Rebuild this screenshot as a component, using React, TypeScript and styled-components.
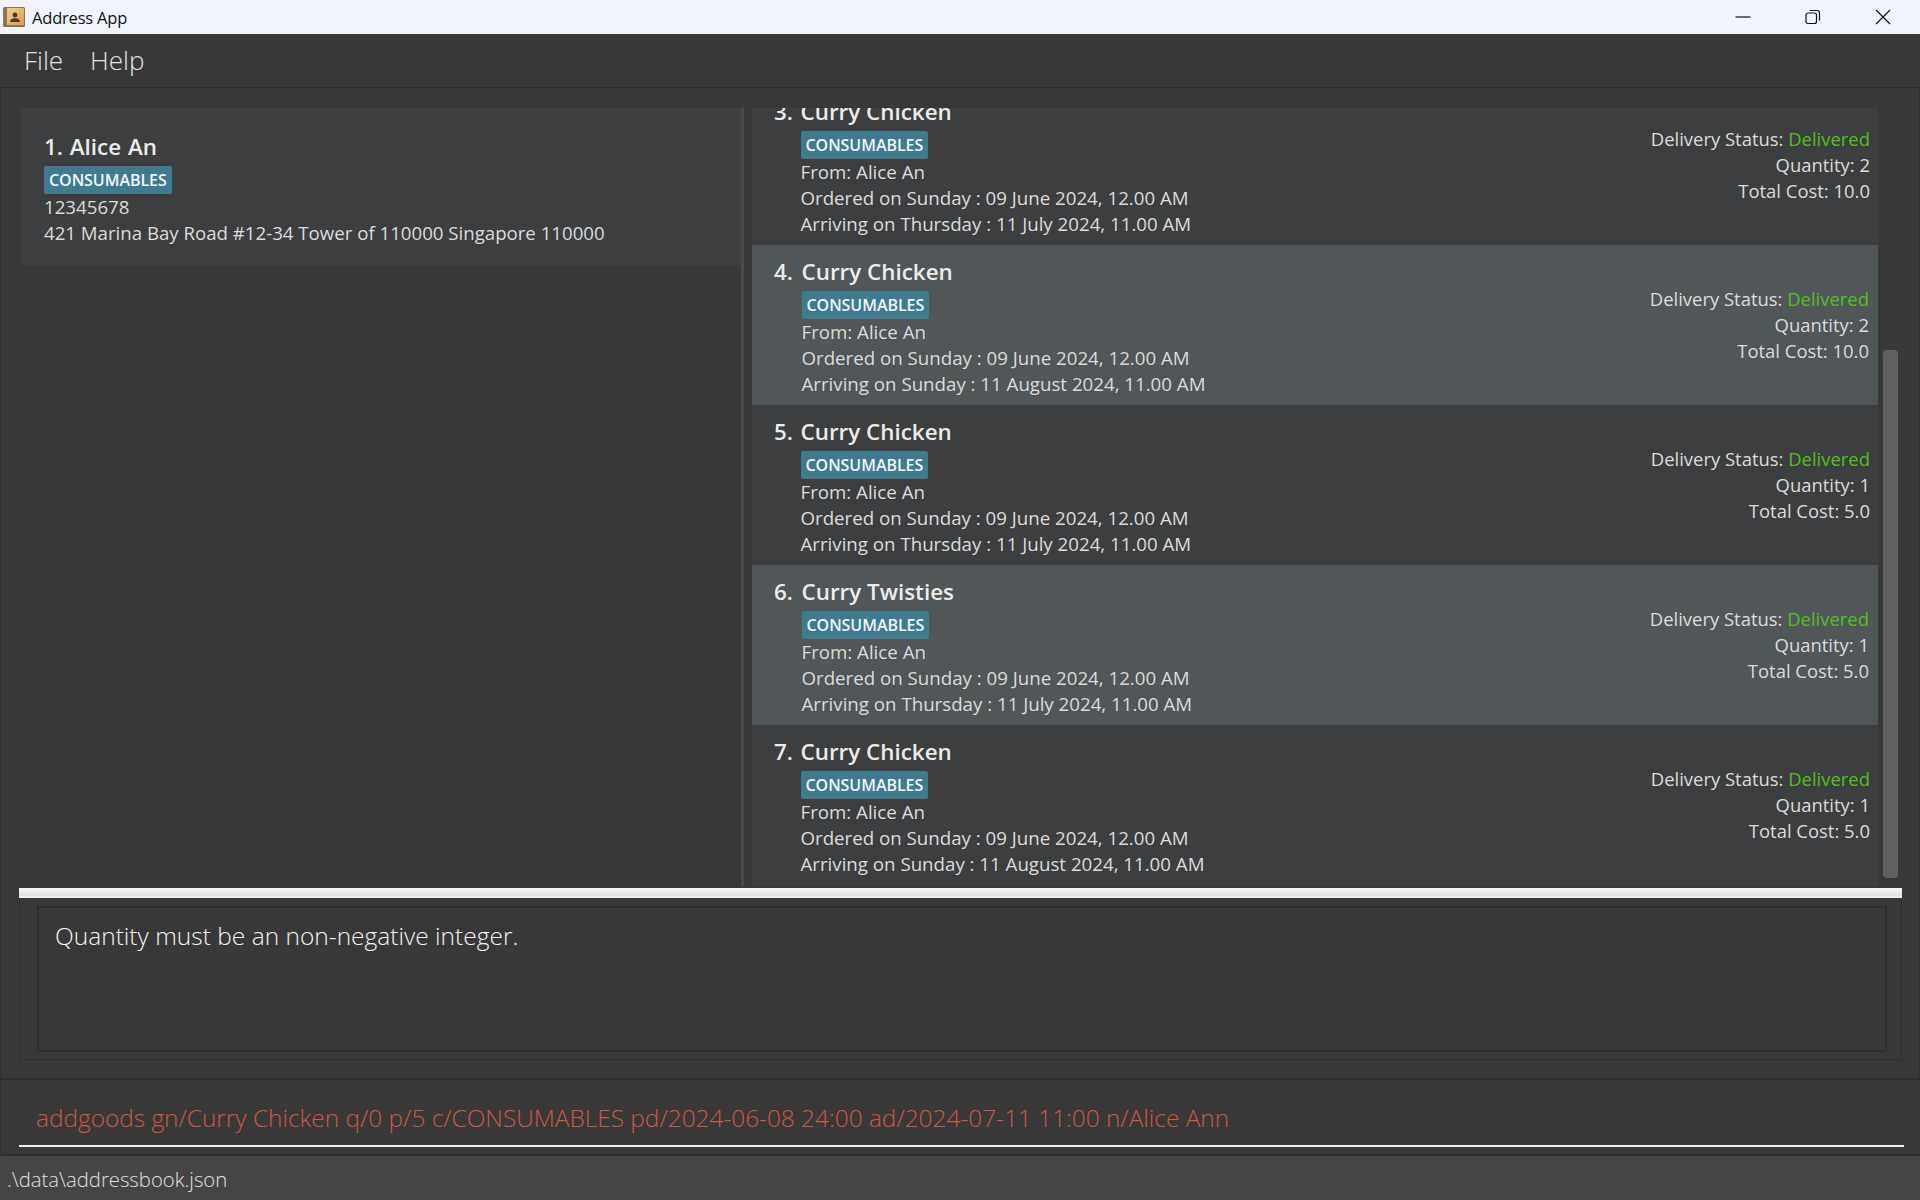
import React from "react";
import styled, { createGlobalStyle } from "styled-components";

const Global = createGlobalStyle`
  html, body { margin: 0; padding: 0; background: #383838; overflow: hidden; }
  * { box-sizing: border-box; }
  #root { width: 1920px; height: 1200px; }
`;

const FONT = `"Open Sans", "Noto Sans", sans-serif`;

const Page = styled.div`
  width: 1920px; height: 1200px; display: flex; flex-direction: column;
  background: #383838; font-family: ${FONT}; color: #e8e8e8;
`;
const TitleBar = styled.header`
  height: 34px; flex: none; background: #f0f4fb; display: flex; align-items: center;
  padding: 0 2px 0 3px; color: #111; font-size: 16.5px; letter-spacing: -0.2px;
`;
const TitleText = styled.span`margin-left: 7px; flex: 1;`;
const WinButton = styled.button`
  width: 70px; height: 34px; padding: 0; border: 0; background: none;
  display: flex; align-items: center; justify-content: center;
`;
const MenuBar = styled.nav`
  height: 54px; flex: none; display: flex; align-items: center; gap: 27px; padding: 0 0 2px 24px;
  background: #383838; border-bottom: 1px solid #2c2c2c;
  font-size: 26px; font-weight: 300; color: #e4e4e4;
`;
const Main = styled.main`
  height: 992px; flex: none; padding: 20px 18px 0 20px; display: flex; flex-direction: column;
  border-left: 1px solid #303030; border-right: 1px solid #303030; border-bottom: 2px solid #2c2c2c;
`;
const Split = styled.section`
  height: 778px; flex: none; display: flex;
`;
const LeftPane = styled.div`
  width: 720px; flex: none;
`;
const Divider = styled.div`
  width: 11px; flex: none;
  &::before { content: ""; display: block; width: 3px; height: 100%; background: #4a4a4a; }
`;
const Card = styled.article`
  height: 158px; background: #3c3e3f; padding: 22px 0 0 23px;
`;
const RightPane = styled.div`
  width: 1126px; flex: none; height: 100%; overflow: hidden; background: #3c3e3f;
`;
const RowStack = styled.div`margin-top: -23px;`;
const Row = styled.article<{ $alt: boolean }>`
  height: 160px; display: flex; justify-content: space-between;
  background: ${(p) => (p.$alt ? "#515658" : "#3c3e3f")};
  padding: 11px ${(p) => (p.$alt ? 9 : 8)}px 0 22px;
`;
const RowLeft = styled.div`display: flex; flex-direction: column; align-items: flex-start;`;
const Heading = styled.h3`
  margin: 0; font-size: 22.4px; line-height: 32px; font-weight: 600; color: #ececec; display: flex;
`;
const Idx = styled.span<{ $alt: boolean }>`width: ${(p) => (p.$alt ? 27.5 : 26.5)}px; flex: none;`;
const Body = styled.div<{ $alt?: boolean }>`
  margin-left: ${(p) => (p.$alt ? 27.5 : 26.5)}px;
`;
const Badge = styled.div`
  display: inline-flex; align-items: center; height: 28px; padding: 0 5px; margin: 3px 0 0;
  background: #3e7b91; border-radius: 2px; color: #f2f6f8;
  font-size: 16px; font-weight: 600; letter-spacing: -0.05px;
`;
const Line = styled.div`
  font-size: 18.7px; line-height: 26px; color: #dcdcdc; white-space: nowrap;
`;
const AddressLine = styled(Line)`font-size: 18.65px;`;
const StatLine = styled(Line)`font-size: 18.45px;`;
const RowRight = styled.div`
  padding-top: 30px; text-align: right;
`;
const Ok = styled.span`color: #4ec21c;`;
const Scroll = styled.div`
  flex: none; width: 15px; height: 528px; margin: 242px 0 0 5px; background: #606060; border-radius: 4px;
`;
const CardName = styled.h3`
  margin: 0; font-size: 22.4px; line-height: 33px; font-weight: 600; color: #ececec; word-spacing: 1px;
`;
const Handle = styled.div`
  height: 10px; flex: none; margin: 2px -1px 0 -2px;
  background: linear-gradient(#fafafa, #e2e2e2 70%, #f4f4f4);
`;
const ResultOuter = styled.div`
  height: 162px; flex: none; padding: 8px 14px 8px 16.5px; margin: 0 -1px 0 -2px; border: 1px solid #2e2e2e; border-top: 0;
`;
const ResultInner = styled.div`
  height: 146px; border: 2px solid #2d2d2d; padding: 11px 16.5px; font-size: 24.5px; font-weight: 300; color: #f4f4f4;
  line-height: 34px;
`;
const Cmd = styled.section`
  height: 76px; flex: none; padding: 20px 0 0 35px; position: relative;
  font-size: 24.4px; font-weight: 300; color: #cc5a44; line-height: 36px; border-bottom: 2px solid #2e2e2e;
  border-left: 1px solid #303030;
  &::after { content: ""; position: absolute; left: 18px; width: 1885px; top: 65px; height: 2px; background: #f0f0f0; }
`;
const Status = styled.footer`
  flex: 1; background: #454545; padding-left: 7px; font-size: 20.3px; font-weight: 300; color: #e0e0e0; line-height: 46px;
`;

const orders = [
  { n: 3, name: "Curry Chicken", arr: "Thursday : 11 July 2024", qty: 2, cost: "10.0" },
  { n: 4, name: "Curry Chicken", arr: "Sunday : 11 August 2024", qty: 2, cost: "10.0" },
  { n: 5, name: "Curry Chicken", arr: "Thursday : 11 July 2024", qty: 1, cost: "5.0" },
  { n: 6, name: "Curry Twisties", arr: "Thursday : 11 July 2024", qty: 1, cost: "5.0" },
  { n: 7, name: "Curry Chicken", arr: "Sunday : 11 August 2024", qty: 1, cost: "5.0" },
];

const AppIcon = () => (
  <svg width="22" height="20" viewBox="0 0 22 20">
    <defs>
      <linearGradient id="page" x1="0" y1="0" x2="1" y2="1">
        <stop offset="0" stopColor="#f2cf8e" />
        <stop offset="1" stopColor="#d89c48" />
      </linearGradient>
    </defs>
    <rect x="0" y="0" width="22" height="20" rx="1.5" fill="#8a7658" />
    <rect x="4" y="1" width="17" height="17" fill="url(#page)" />
    <circle cx="12" cy="8" r="2.4" fill="#4f3a20" />
    <path d="M7 15c0-2.5 2.5-3.8 5-3.8s5 1.3 5 3.8z" fill="#4f3a20" />
  </svg>
);

export default function App() {
  return (
    <Page>
      <Global />
      <TitleBar>
        <AppIcon />
        <TitleText>Address App</TitleText>
        <WinButton aria-label="minimize">
          <svg width="16" height="16" viewBox="0 0 16 16"><path d="M0.5 8h15" stroke="#111" strokeWidth="1.2" /></svg>
        </WinButton>
        <WinButton aria-label="restore">
          <svg width="16" height="16" viewBox="0 0 16 16" fill="none" stroke="#111" strokeWidth="1.2">
            <rect x="1" y="4" width="10.5" height="10.5" rx="2" />
            <path d="M4.5 1.5h7.5a2.5 2.5 0 0 1 2.5 2.5v7.5" />
          </svg>
        </WinButton>
        <WinButton aria-label="close">
          <svg width="16" height="16" viewBox="0 0 16 16"><path d="M1 1l14 14M15 1L1 15" stroke="#111" strokeWidth="1.2" /></svg>
        </WinButton>
      </TitleBar>
      <MenuBar>
        <span>File</span>
        <span>Help</span>
      </MenuBar>
      <Main>
        <Split>
          <LeftPane>
            <Card>
              <CardName>1. Alice An</CardName>
              <Badge>CONSUMABLES</Badge>
              <Line>12345678</Line>
              <AddressLine>421 Marina Bay Road #12-34 Tower of 110000 Singapore 110000</AddressLine>
            </Card>
          </LeftPane>
          <Divider />
          <RightPane>
            <RowStack>
              {orders.map((o) => {
                const alt = o.n % 2 === 0;
                return (
                  <Row key={o.n} $alt={alt}>
                    <RowLeft>
                      <Heading>
                        <Idx $alt={alt}>{o.n}.</Idx>
                        {o.name}
                      </Heading>
                      <Body $alt={alt}>
                        <Badge>CONSUMABLES</Badge>
                        <Line>From: Alice An</Line>
                        <Line>Ordered on Sunday : 09 June 2024, 12.00 AM</Line>
                        <Line>Arriving on {o.arr}, 11.00 AM</Line>
                      </Body>
                    </RowLeft>
                    <RowRight>
                      <StatLine>Delivery Status: <Ok>Delivered</Ok></StatLine>
                      <StatLine>Quantity: {o.qty}</StatLine>
                      <StatLine>Total Cost: {o.cost}</StatLine>
                    </RowRight>
                  </Row>
                );
              })}
            </RowStack>
          </RightPane>
          <Scroll />
        </Split>
        <Handle />
        <ResultOuter>
          <ResultInner>Quantity must be an non-negative integer.</ResultInner>
        </ResultOuter>
      </Main>
      <Cmd>addgoods gn/Curry Chicken q/0 p/5 c/CONSUMABLES pd/2024-06-08 24:00 ad/2024-07-11 11:00 n/Alice Ann</Cmd>
      <Status>.\data\addressbook.json</Status>
    </Page>
  );
}
